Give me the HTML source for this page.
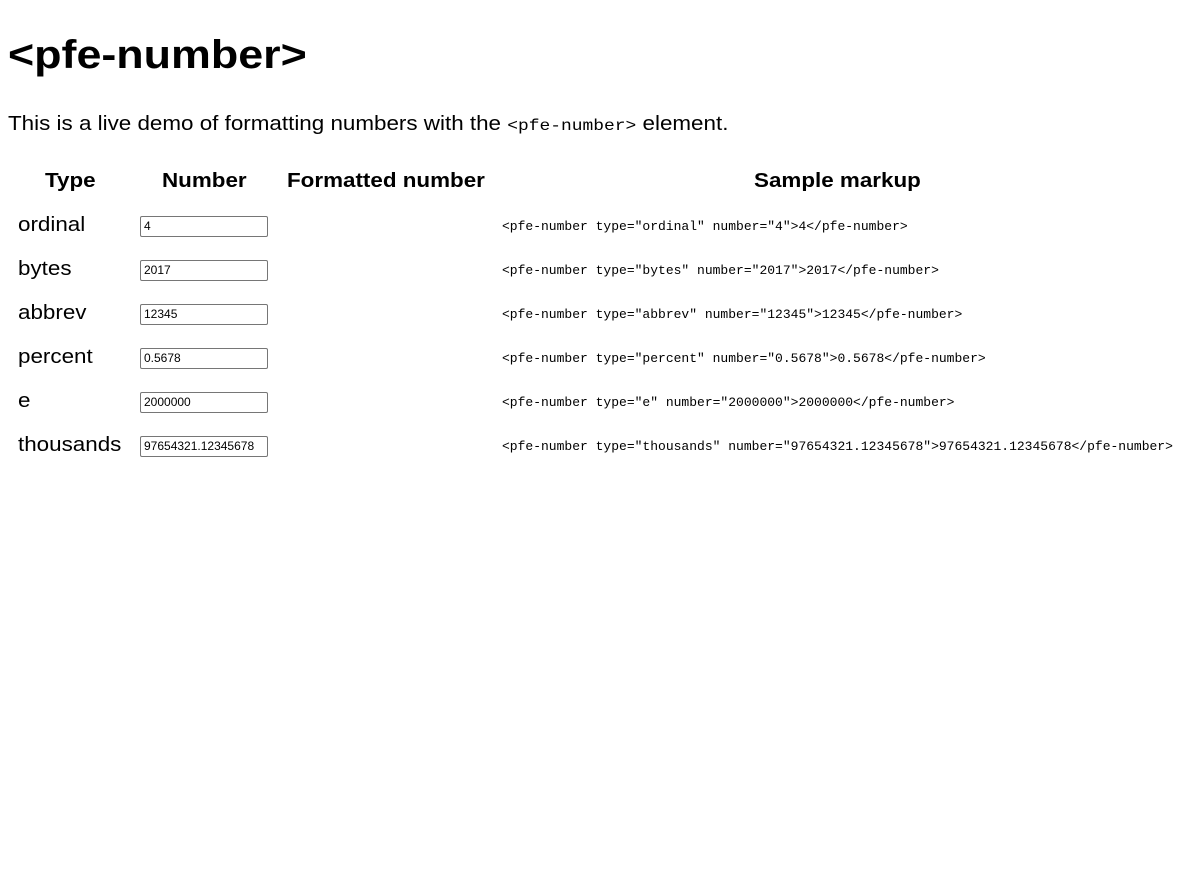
<!DOCTYPE html>
<html><head><style>
body{margin:0;background:#fff;font-family:"Liberation Sans",Arial,sans-serif;color:#000;}
.a{position:absolute;white-space:nowrap}
.s{transform:scaleX(1.12);transform-origin:0 0}
h1{position:absolute;left:8px;top:30px;margin:0;font-size:40px;font-weight:bold;line-height:50px;transform:scaleX(1.12);transform-origin:0 0;white-space:nowrap}
.p{left:8px;top:111px;font-size:20px;line-height:26px}
.p code{font-family:"Liberation Mono",monospace;font-size:16px}
.th{font-size:20px;font-weight:bold;top:168px;line-height:26px}
.td{font-size:20px;left:18px;line-height:26px}
.in{position:absolute;left:140px;border:1px solid #767676;border-radius:2px;font-size:12px;line-height:19px;padding-left:3px;box-sizing:border-box;width:128px;height:21px;overflow:hidden;white-space:nowrap}
.m{left:502px;font-family:"Liberation Mono",monospace;font-size:13px;line-height:16px}
</style></head><body>
<h1>&lt;pfe-number&gt;</h1>
<div class="a p s">This is a live demo of formatting numbers with the <code>&lt;pfe-number&gt;</code> element.</div>
<div class="a th s" style="left:45px">Type</div>
<div class="a th s" style="left:162px">Number</div>
<div class="a th s" style="left:287px">Formatted number</div>
<div class="a th s" style="left:754px">Sample markup</div>

<div class="a td s" style="top:212px">ordinal</div>
<div class="in" style="top:216px">4</div>
<div class="a m" style="top:219px">&lt;pfe-number type="ordinal" number="4"&gt;4&lt;/pfe-number&gt;</div>

<div class="a td s" style="top:256px">bytes</div>
<div class="in" style="top:260px">2017</div>
<div class="a m" style="top:263px">&lt;pfe-number type="bytes" number="2017"&gt;2017&lt;/pfe-number&gt;</div>

<div class="a td s" style="top:300px">abbrev</div>
<div class="in" style="top:304px">12345</div>
<div class="a m" style="top:307px">&lt;pfe-number type="abbrev" number="12345"&gt;12345&lt;/pfe-number&gt;</div>

<div class="a td s" style="top:344px">percent</div>
<div class="in" style="top:348px">0.5678</div>
<div class="a m" style="top:351px">&lt;pfe-number type="percent" number="0.5678"&gt;0.5678&lt;/pfe-number&gt;</div>

<div class="a td s" style="top:388px">e</div>
<div class="in" style="top:392px">2000000</div>
<div class="a m" style="top:395px">&lt;pfe-number type="e" number="2000000"&gt;2000000&lt;/pfe-number&gt;</div>

<div class="a td s" style="top:432px">thousands</div>
<div class="in" style="top:436px">97654321.12345678</div>
<div class="a m" style="top:439px">&lt;pfe-number type="thousands" number="97654321.12345678"&gt;97654321.12345678&lt;/pfe-number&gt;</div>
</body></html>
